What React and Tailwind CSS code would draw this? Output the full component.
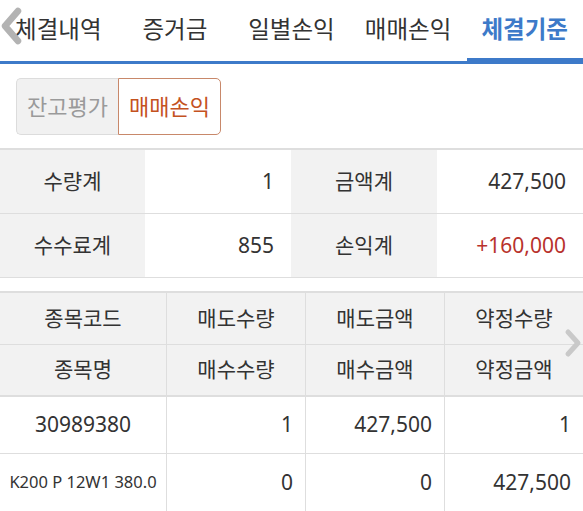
import React from 'react'

const tabs = ['체결내역', '증거금', '일별손익', '매매손익', '체결기준']

const summary = [
  [
    { label: '수량계', value: '1' },
    { label: '금액계', value: '427,500' },
  ],
  [
    { label: '수수료계', value: '855' },
    { label: '손익계', value: '+160,000', red: true },
  ],
]

const headRows = [
  ['종목코드', '매도수량', '매도금액', '약정수량'],
  ['종목명', '매수수량', '매수금액', '약정금액'],
]

function App() {
  return (
    <div
      className="relative w-[583px] h-[511px] overflow-hidden bg-white text-[#333]"
      style={{ fontFamily: '"Noto Sans", "Noto Sans CJK KR", sans-serif' }}
    >
      {/* Tabs */}
      <div className="relative">
        <div className="grid grid-cols-5 border-b-[3px] border-[#3d7ac9]">
          {tabs.map((t, i) => (
            <div
              key={t}
              className={`h-[61px] flex items-center justify-center text-[23.5px] pb-[2px] ${
                i === tabs.length - 1 ? 'text-[#3d7ac9] font-bold' : 'text-[#333]'
              }`}
            >
              {t}
            </div>
          ))}
        </div>
        <div className="absolute right-0 bottom-0 w-[116px] h-[6px] bg-[#3d7ac9]" />
        <svg className="absolute left-0 top-[7px]" width="22" height="38" viewBox="0 0 22 38">
          <path d="M18 4 L5 19 L18 34" fill="none" stroke="#b3b3b3" strokeWidth="6.5" strokeLinecap="round" strokeLinejoin="round" />
        </svg>
      </div>

      {/* Segment */}
      <div className="pt-[14px] pl-[16px] pb-[13px] flex">
        <div className="flex h-[57px]">
          <button
            type="button"
            className="w-[102px] rounded-l-[5px] border border-r-0 border-[#dcdcdc] bg-[#f1f1f1] text-[#9a9a9a] text-[22px]"
          >
            잔고평가
          </button>
          <button
            type="button"
            className="w-[103px] rounded-r-[5px] border border-[#c8886a] bg-white text-[#c4521f] text-[22px]"
          >
            매매손익
          </button>
        </div>
      </div>

      {/* Summary */}
      <div className="border-t-2 border-[#dedede]">
        {summary.map((row, ri) => (
          <div key={ri} className="grid grid-cols-[145px_146px_146px_146px] h-[64px] border-b border-[#dedede]">
            {row.map((c) => (
              <React.Fragment key={c.label}>
                <div className="bg-[#f2f2f2] flex items-center justify-center text-[21px]">{c.label}</div>
                <div className={`flex items-center justify-end pr-[17px] text-[21px] ${c.red ? 'text-[#b8322c]' : ''}`}>
                  {c.value}
                </div>
              </React.Fragment>
            ))}
          </div>
        ))}
      </div>

      {/* Detail table */}
      <div className="mt-[13px] border-t-2 border-[#dedede]">
        {headRows.map((row, ri) => (
          <div
            key={ri}
            className={`grid grid-cols-[166px_139px_139px_139px] h-[52px] bg-[#f2f2f2] ${
              ri === 1 ? 'border-b-2' : 'border-b'
            } border-[#dedede]`}
          >
            {row.map((c, ci) => (
              <div
                key={c}
                className={`flex items-center justify-center text-[21px] ${ci > 0 ? 'border-l border-[#dedede]' : ''}`}
              >
                {c}
              </div>
            ))}
          </div>
        ))}
        <div className="grid grid-cols-[166px_139px_139px_139px] h-[57px] border-b border-[#dedede]">
          <div className="flex items-center justify-center text-[21px]">30989380</div>
          <div className="flex items-center justify-end pr-3 text-[21px] border-l border-[#dedede]">1</div>
          <div className="flex items-center justify-end pr-3 text-[21px] border-l border-[#dedede]">427,500</div>
          <div className="flex items-center justify-end pr-3 text-[21px] border-l border-[#dedede]">1</div>
        </div>
        <div className="grid grid-cols-[166px_139px_139px_139px] h-[58px] border-b border-[#dedede]">
          <div className="flex items-center justify-center text-[16.5px] whitespace-nowrap">K200 P 12W1 380.0</div>
          <div className="flex items-center justify-end pr-3 text-[21px] border-l border-[#dedede]">0</div>
          <div className="flex items-center justify-end pr-3 text-[21px] border-l border-[#dedede]">0</div>
          <div className="flex items-center justify-end pr-3 text-[21px] border-l border-[#dedede]">427,500</div>
        </div>
      </div>

      <svg className="absolute left-[564px] top-[328px]" width="18" height="30" viewBox="0 0 18 30">
        <path d="M4 4 L14 15 L4 26" fill="none" stroke="#c9c9c9" strokeWidth="5" strokeLinecap="round" strokeLinejoin="round" />
      </svg>
    </div>
  )
}

export default App
